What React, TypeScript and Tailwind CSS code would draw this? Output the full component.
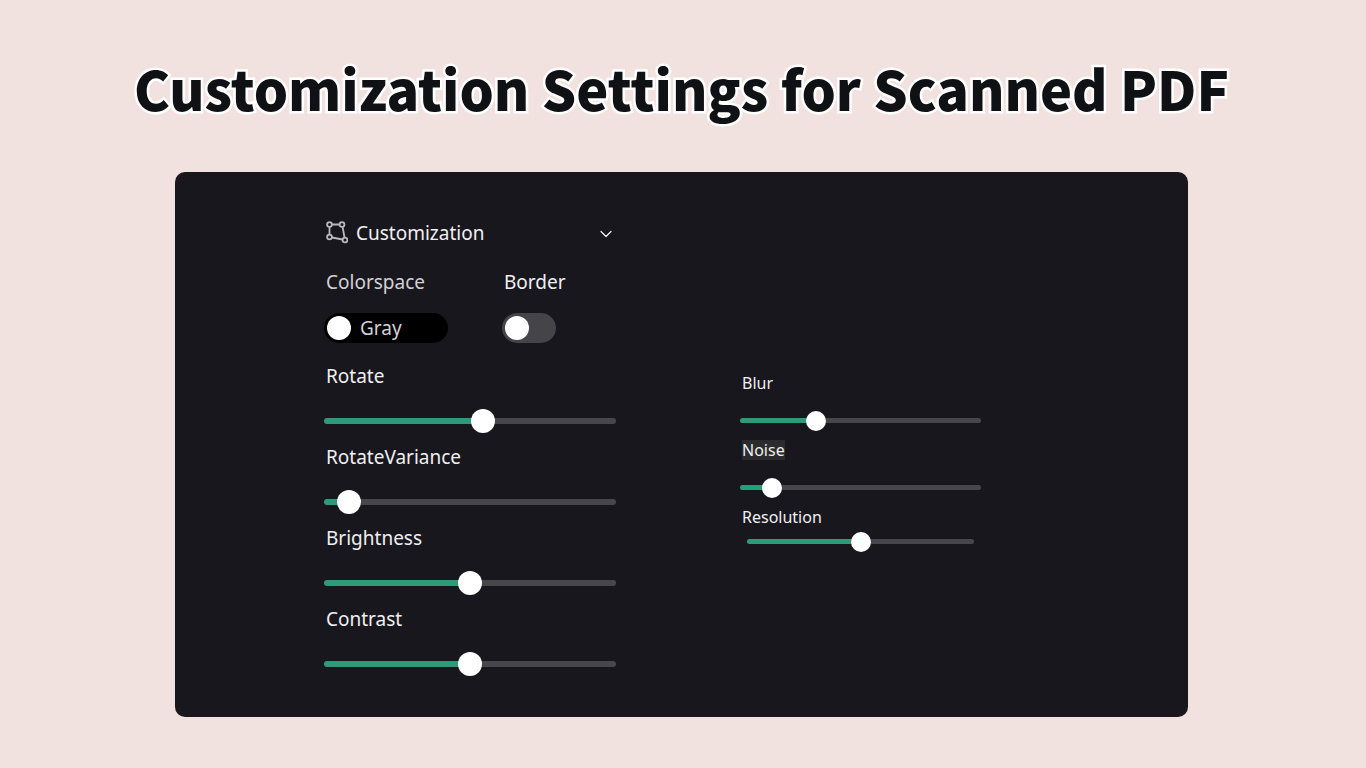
import React, { useState } from "react";
import { ChevronDown } from "lucide-react";

type SliderProps = {
  id: string;
  label: string;
  initial: number;
};

const trackStyle = (value: number) => {
  return {
    background: `linear-gradient(to right, #2e9b78 ${value}%, #47464b ${value}%)`,
  };
};

const LargeSlider = ({ id, label, initial }: SliderProps) => {
  const [value, setValue] = useState(initial);

  return (
    <div className="flex flex-col">
      <label htmlFor={id} className="pl-[2px] text-[19px] leading-6">
        {label}
      </label>
      <input
        id={id}
        type="range"
        value={value}
        onChange={(e) => setValue(Number(e.target.value))}
        style={trackStyle(value)}
        className="mt-[30px] h-[6px] w-full appearance-none rounded-full [&::-webkit-slider-thumb]:size-6 [&::-webkit-slider-thumb]:appearance-none [&::-webkit-slider-thumb]:rounded-full [&::-webkit-slider-thumb]:bg-white"
      />
    </div>
  );
};

const SmallSlider = ({
  id,
  label,
  initial,
  selected = false,
  compact = false,
}: SliderProps & { selected?: boolean; compact?: boolean }) => {
  const [value, setValue] = useState(initial);

  return (
    <div className="flex flex-col items-start">
      <label
        htmlFor={id}
        className={`ml-[2px] text-base leading-5 ${selected ? "bg-[#2b2b2d]" : ""}`}
      >
        {label}
      </label>
      <div className={compact ? "flex w-full px-[7px] pt-3" : "flex w-full pt-[25px]"}>
        <input
          id={id}
          type="range"
          value={value}
          onChange={(e) => setValue(Number(e.target.value))}
          style={trackStyle(value)}
          className="h-[5px] w-full appearance-none rounded-full [&::-webkit-slider-thumb]:size-5 [&::-webkit-slider-thumb]:appearance-none [&::-webkit-slider-thumb]:rounded-full [&::-webkit-slider-thumb]:bg-white"
        />
      </div>
    </div>
  );
};

const ShapeIcon = () => (
  <svg
    width="24"
    height="24"
    viewBox="0 0 24 24"
    fill="none"
    stroke="#b9b8bb"
    strokeWidth="1.8"
    aria-hidden="true"
  >
    <circle cx="5.5" cy="3.5" r="2.4" />
    <circle cx="18" cy="3.5" r="2.4" />
    <circle cx="5.5" cy="16" r="2.4" />
    <circle cx="21" cy="19" r="2.4" />
    <path d="M8 3.5h7.5M5.5 6v7.5M18.6 6l1.9 10.5M8 16.5l10.5 2" />
  </svg>
);

const App = () => {
  return (
    <main className="min-h-screen bg-[#f1e1df] pt-12 pr-[178px] pb-[51px] pl-[175px] font-['Noto_Sans','Open_Sans',sans-serif]">
      <h1 className="-mx-24 text-center font-['Noto_Sans_CJK_SC',sans-serif] text-[54px] leading-[80px] font-black whitespace-nowrap text-[#101114] [-webkit-text-stroke:5px_white] [paint-order:stroke_fill]">
        Customization Settings for Scanned PDF
      </h1>

      <section className="mt-11 flex items-start gap-[124px] rounded-[10px] bg-[#19171e] pt-[46px] pb-[50px] pl-[149px] text-[#f0eff1]">
        <div className="w-[292px]">
          <button type="button" className="flex h-[30px] w-full items-center text-[19px]">
            <ShapeIcon />
            <span className="ml-2">Customization</span>
            <ChevronDown className="mt-[2px] ml-auto" size={20} strokeWidth={1.5} />
          </button>

          <div className="mt-[22px] flex">
            <div className="w-[178px]">
              <label htmlFor="colorspace" className="block pl-[2px] text-[19px] leading-6 text-[#d2d1d4]">
                Colorspace
              </label>
              <div className="mt-[19px] flex h-[30px] w-[124px] items-center rounded-full bg-black pl-[3px]">
                <input
                  id="colorspace"
                  type="checkbox"
                  role="switch"
                  className="size-6 appearance-none rounded-full bg-white"
                />
                <span className="ml-[9px] text-[19px] text-[#d2d1d4]">Gray</span>
              </div>
            </div>
            <div>
              <label htmlFor="border" className="block pl-[2px] text-[19px] leading-6">
                Border
              </label>
              <div className="mt-[19px] flex h-[30px] w-[54px] items-center rounded-full bg-[#454449] pl-[3px]">
                <input
                  id="border"
                  type="checkbox"
                  role="switch"
                  className="size-6 appearance-none rounded-full bg-white"
                />
              </div>
            </div>
          </div>

          <div className="mt-[21px] flex flex-col gap-[21px]">
            <LargeSlider id="rotate" label="Rotate" initial={55} />
            <LargeSlider id="rotate-variance" label="RotateVariance" initial={5} />
            <LargeSlider id="brightness" label="Brightness" initial={50} />
            <LargeSlider id="contrast" label="Contrast" initial={50} />
          </div>
        </div>

        <div className="mt-[155px] flex w-[241px] flex-col gap-[17px]">
          <SmallSlider id="blur" label="Blur" initial={30} />
          <SmallSlider id="noise" label="Noise" initial={10} selected />
          <SmallSlider id="resolution" label="Resolution" initial={50} compact />
        </div>
      </section>
    </main>
  );
};

export default App;
